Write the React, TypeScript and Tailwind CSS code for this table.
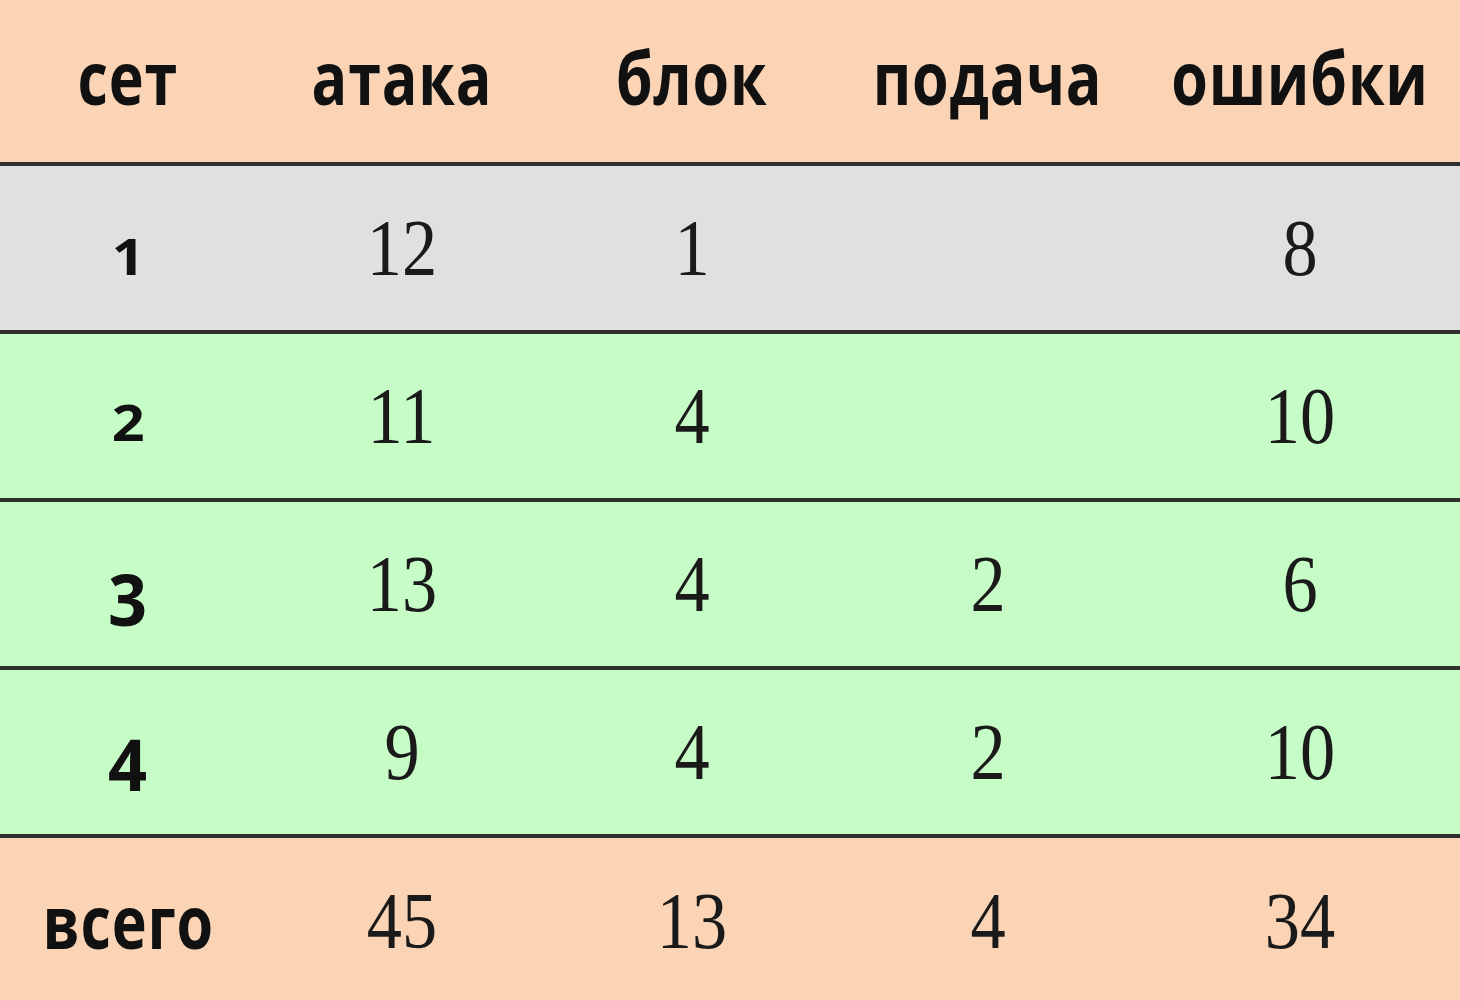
import React from "react";

const cols = "grid grid-cols-[256px_291px_290px_302px_1fr]";

const headers = ["сет", "атака", "блок", "подача", "ошибки"];

// first-column digits mimic old-style figures: 1 and 2 sit at x-height, 3 and 4 descend
const rows: { set: string; setCls: string; bg: string; vals: string[] }[] = [
  { set: "1", setCls: "text-[50px] scale-x-[1.15] translate-y-[8px]", bg: "bg-[#e0e0e0]", vals: ["12", "1", "", "8"] },
  { set: "2", setCls: "text-[50px] scale-x-[1.15] translate-y-[6px]", bg: "bg-[#c6fcc6]", vals: ["11", "4", "", "10"] },
  { set: "3", setCls: "text-[72px] scale-x-[0.95] translate-y-[14px]", bg: "bg-[#c6fcc6]", vals: ["13", "4", "2", "6"] },
  { set: "4", setCls: "text-[72px] scale-x-[0.95] translate-y-[11px]", bg: "bg-[#c6fcc6]", vals: ["9", "4", "2", "10"] },
];

const totals = ["45", "13", "4", "34"];

function Sans({ children }: { children: React.ReactNode }) {
  return (
    <span className="inline-block scale-x-[0.8] font-['Open_Sans',sans-serif] font-bold text-[74px] leading-none tracking-[1px] text-[#111]">
      {children}
    </span>
  );
}

function Num({ children }: { children: React.ReactNode }) {
  return (
    <span className="inline-block scale-x-[0.88] font-['Liberation_Serif',serif] text-[80px] leading-none text-[#1a1a1a]">
      {children}
    </span>
  );
}

export default function App() {
  return (
    <div className="w-[1460px] h-[1000px] overflow-hidden bg-[#fad4b5]">
      {/* header */}
      <div className={`${cols} h-[162px] items-center text-center bg-[#fad4b5]`}>
        {headers.map((h) => (
          <div key={h} className="pb-2">
            <Sans>{h}</Sans>
          </div>
        ))}
      </div>

      {rows.map((r) => (
        <div key={r.set} className={`${cols} h-[168px] items-center text-center border-t-4 border-[#2f2f2f] ${r.bg}`}>
          <div>
            <span className={`inline-block font-['Noto_Sans',sans-serif] font-bold leading-none text-[#111] ${r.setCls}`}>
              {r.set}
            </span>
          </div>
          {r.vals.map((v, i) => (
            <div key={i}>
              <Num>{v}</Num>
            </div>
          ))}
        </div>
      ))}

      {/* totals */}
      <div className={`${cols} h-[170px] items-center text-center border-t-4 border-[#2f2f2f] bg-[#fad4b5]`}>
        <div>
          <Sans>всего</Sans>
        </div>
        {totals.map((v, i) => (
          <div key={i}>
            <Num>{v}</Num>
          </div>
        ))}
      </div>
    </div>
  );
}
